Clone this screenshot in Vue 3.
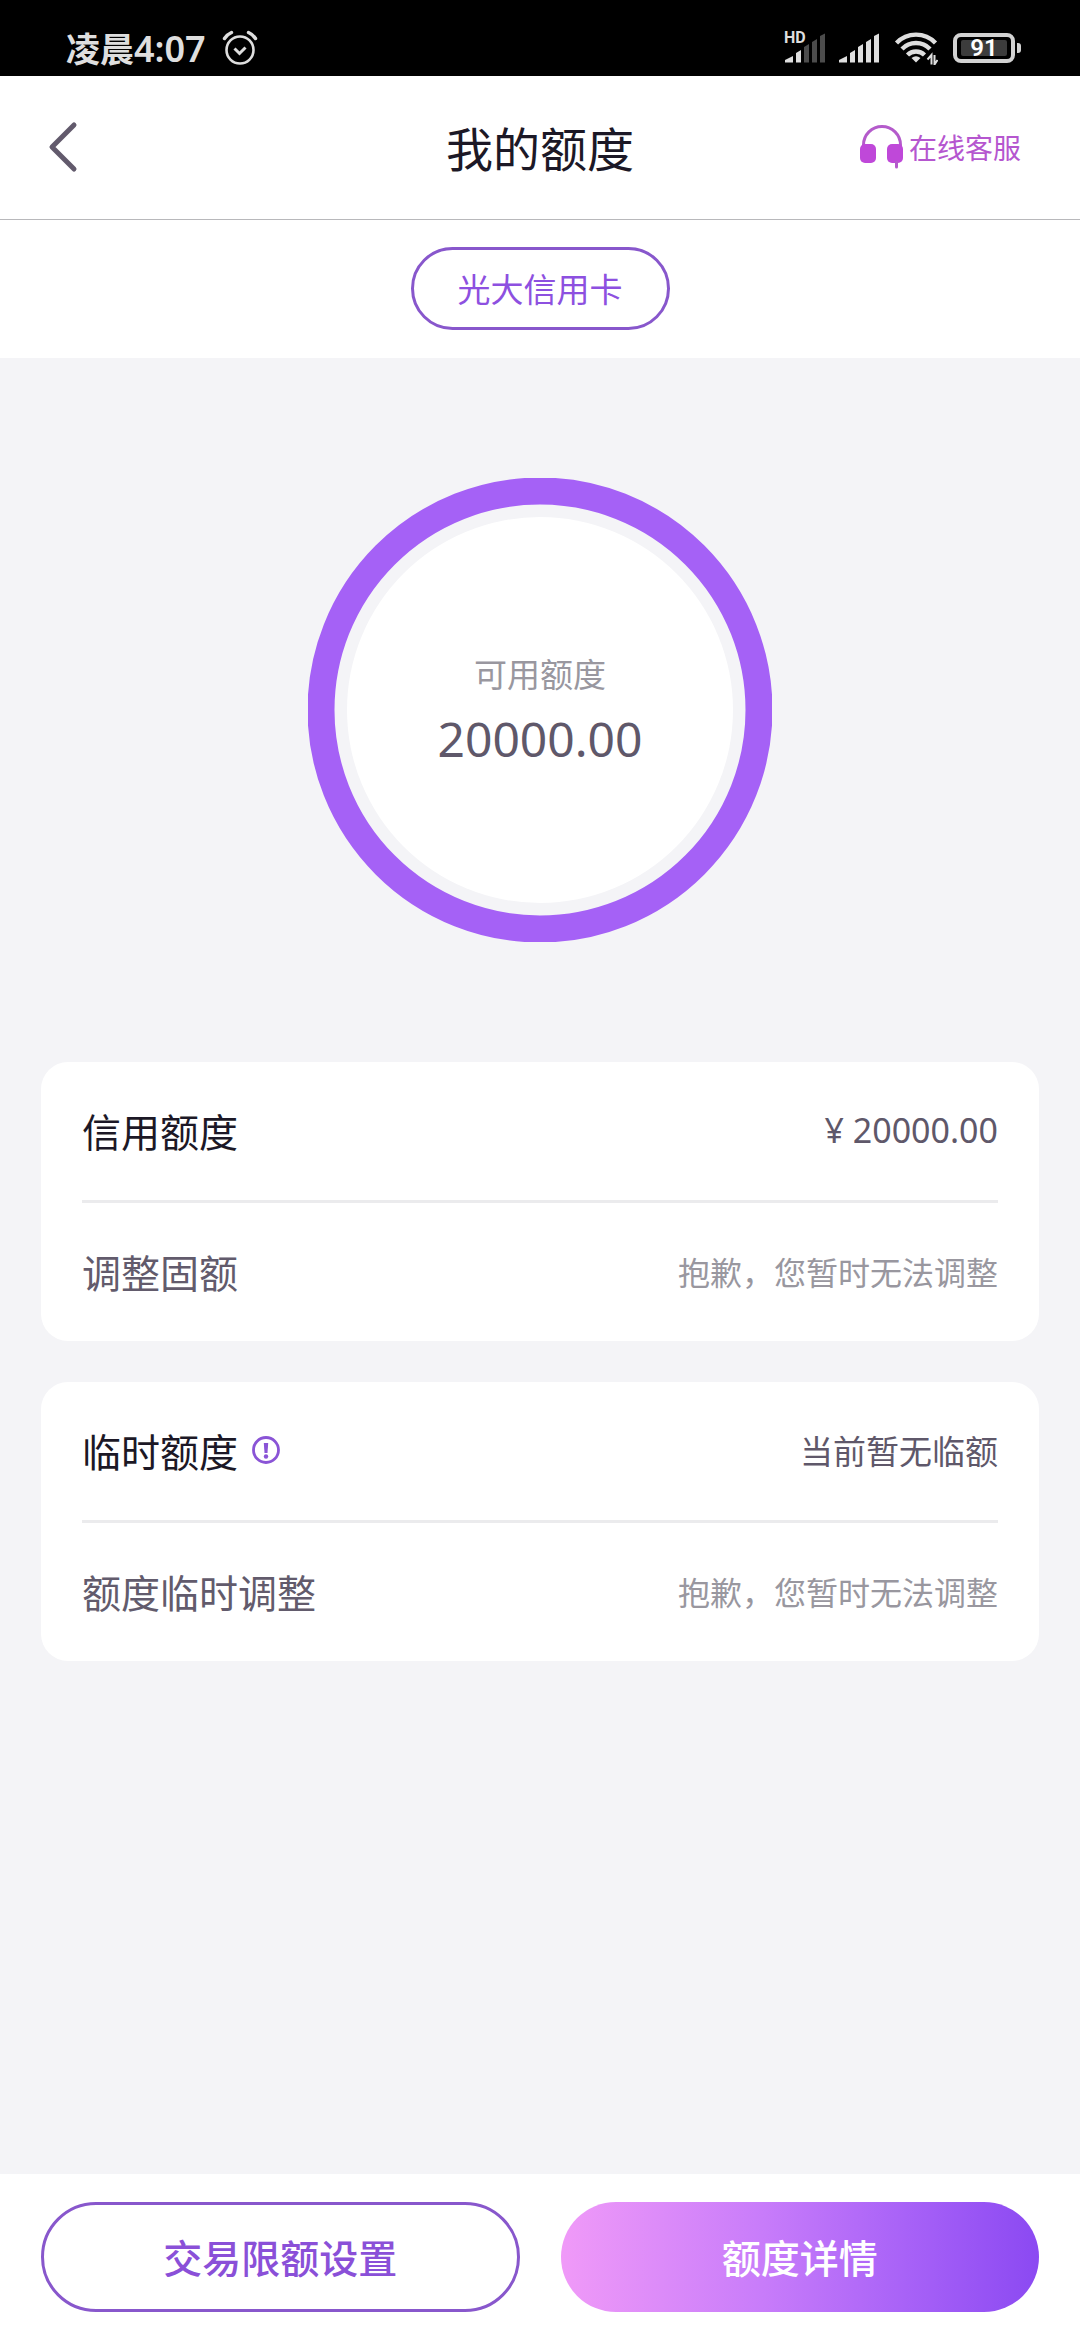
<script setup>
const groups = [
  {
    title: '信用额度',
    value: '¥ 20000.00',
    numeric: true,
    info: false,
    action: '调整固额',
    hint: '抱歉，您暂时无法调整'
  },
  {
    title: '临时额度',
    value: '当前暂无临额',
    numeric: false,
    info: true,
    action: '额度临时调整',
    hint: '抱歉，您暂时无法调整'
  }
]
</script>

<template>
  <div class="page">
    <div class="status">
      <div class="status-left">
        <span class="clock">凌晨<span class="digits">4:07</span></span>
        <svg class="alarm" width="36" height="36" viewBox="0 0 36 36" fill="none" stroke="#dedede" stroke-linecap="round">
          <circle cx="18" cy="20" r="13.5" stroke-width="2.6" />
          <path d="M12.5 18.5L17.5 23.5L23.5 17.5" stroke-width="3" stroke-linecap="butt" />
          <path d="M2.5 8.5Q5 4.5 9.5 2.5M26.5 2.5Q31 4.5 33.5 8.5" stroke-width="3.4" />
        </svg>
      </div>
      <div class="status-right">
        <div class="sim">
          <span class="hd">HD</span>
          <svg width="42" height="32" viewBox="0 0 42 32">
            <path fill="#dedede" d="M1 30.5V28L9 24V30.5ZM12 30.5V21L17 18V30.5Z" />
            <path fill="#4c4c4c" d="M20 30.5V15L25 12V30.5ZM28 30.5V10L33 7V30.5ZM36 30.5V4L41 1.5V30.5Z" />
          </svg>
        </div>
        <svg class="signal" width="42" height="32" viewBox="0 0 42 32">
          <path fill="#dedede" d="M1 30.5V28L9 24V30.5ZM12 30.5V21L17 18V30.5ZM20 30.5V15L25 12V30.5ZM28 30.5V10L33 7V30.5ZM36 30.5V4L41 1.5V30.5Z" />
        </svg>
        <svg class="wifi" width="44" height="34" viewBox="0 0 44 34" fill="none" stroke="#dedede" stroke-width="4.4">
          <path d="M2.5 12A27 27 0 0 1 41.5 12" />
          <path d="M8 18A19.5 19.5 0 0 1 36 18" />
          <path d="M13.5 24A12 12 0 0 1 30.5 24" />
          <path d="M17.5 27Q22 23.5 26.5 27L22 31.5Z" fill="#dedede" stroke="none" />
          <path d="M37 34V24M40.5 24V34" stroke="#000" stroke-width="6" />
          <path d="M37.5 33.5V24L33.5 28.5M40.5 24V33.5L43.5 29" stroke-width="2" />
        </svg>
        <div class="battery"><span class="charge">91</span></div>
      </div>
    </div>

    <header class="header">
      <button class="back" type="button" aria-label="返回">
        <svg width="34" height="54" viewBox="0 0 34 54" fill="none" stroke="#625a6c" stroke-width="5" stroke-linecap="round" stroke-linejoin="round">
          <path d="M28 5L6 27L28 49" />
        </svg>
      </button>
      <h1 class="title">我的额度</h1>
      <a class="service" href="#">
        <svg width="44" height="44" viewBox="0 0 44 44">
          <path d="M3.5 24V20A18.5 18.5 0 0 1 40.5 20V24" fill="none" stroke="#b45bcb" stroke-width="3" />
          <rect x="0" y="19" width="16" height="19" rx="5" fill="#bf48d9" />
          <rect x="27" y="19" width="16" height="19" rx="5" fill="#bf48d9" />
          <path d="M36.5 37V42" stroke="#b45bcb" stroke-width="3" stroke-linecap="round" />
        </svg>
        <span>在线客服</span>
      </a>
    </header>

    <nav class="tabs">
      <button class="tab" type="button">光大信用卡</button>
    </nav>

    <main class="content">
      <div class="gauge">
        <svg class="ring" viewBox="0 0 464 464">
          <circle cx="232" cy="232" r="219" fill="none" stroke="#a561f6" stroke-width="27" />
          <circle cx="232" cy="232" r="193" fill="#fff" />
        </svg>
        <div class="gauge-text">
          <span class="gauge-label">可用额度</span>
          <span class="gauge-value">20000.00</span>
        </div>
      </div>

      <section v-for="g in groups" :key="g.title" class="card">
        <div class="row">
          <h2 class="name">{{ g.title }}</h2>
          <button v-if="g.info" class="info" type="button" aria-label="说明">
            <svg width="28" height="28" viewBox="0 0 28 28">
              <circle cx="14" cy="14" r="12.5" fill="none" stroke="#8a54d6" stroke-width="2.8" />
              <path d="M11.8 7H16.2L15.5 17H12.5Z" fill="#8a54d6" />
              <circle cx="14" cy="20.5" r="2.2" fill="#8a54d6" />
            </svg>
          </button>
          <span class="value" :class="{ numeric: g.numeric }">{{ g.value }}</span>
        </div>
        <div class="row second">
          <span class="name">{{ g.action }}</span>
          <span class="value hint">{{ g.hint }}</span>
        </div>
      </section>
    </main>

    <footer class="footer">
      <button class="btn outline" type="button">交易限额设置</button>
      <button class="btn solid" type="button">额度详情</button>
    </footer>
  </div>
</template>

<style>
body {
  margin: 0;
}
</style>

<style scoped>
.page {
  display: flex;
  flex-direction: column;
  min-height: 100vh;
  background: #f4f4f7;
  color: #1c1826;
  font-family: "Noto Sans CJK SC", sans-serif;
}

button {
  margin: 0;
  padding: 0;
  border: 0;
  background: none;
  font-family: inherit;
}

svg {
  display: block;
  flex: none;
}

.status {
  display: flex;
  justify-content: space-between;
  align-items: center;
  height: 56px;
  padding: 20px 59px 0 66px;
  background: #000;
  color: #dedede;
}

.status-left,
.status-right {
  display: flex;
  align-items: center;
}

.status-left {
  gap: 16px;
}

.clock {
  font-size: 34px;
  line-height: 40px;
  font-weight: 700;
}

.digits {
  font-family: "Noto Sans", sans-serif;
  font-size: 36px;
  font-weight: 600;
}

.sim {
  position: relative;
  margin-right: 12px;
}

.hd {
  position: absolute;
  left: 0;
  top: -2px;
  font-family: Roboto, sans-serif;
  font-size: 16px;
  line-height: 16px;
  font-weight: 700;
}

.signal {
  margin-right: 14px;
}

.wifi {
  margin-right: 15px;
}

.battery {
  position: relative;
  display: flex;
  box-sizing: border-box;
  width: 62px;
  height: 30px;
  margin-right: 6px;
  padding: 3px 4px;
  border: 4px solid #d2d2d2;
  border-radius: 8px;
}

.battery::after {
  content: "";
  position: absolute;
  right: -10px;
  top: 6px;
  width: 4px;
  height: 10px;
  border-radius: 0 3px 3px 0;
  background: #d2d2d2;
}

.charge {
  flex: 1;
  border-radius: 2px;
  background: #3c3c3c;
  color: #fff;
  font-family: Roboto, sans-serif;
  font-size: 24px;
  line-height: 16px;
  font-weight: 600;
  text-align: center;
}

.header {
  display: grid;
  grid-template-columns: 1fr auto 1fr;
  align-items: center;
  box-sizing: border-box;
  height: 144px;
  padding: 0 59px 2px 46px;
  border-bottom: 1px solid #b8b8bb;
  background: #fff;
}

.title {
  margin: 0;
  padding-left: 13px;
  font-size: 47px;
  line-height: 64px;
  font-weight: 400;
}

.back {
  justify-self: start;
}

.service {
  display: flex;
  justify-self: end;
  align-items: center;
  gap: 5px;
  color: #b556cf;
  font-size: 28px;
  line-height: 40px;
  text-decoration: none;
}

.tabs {
  display: flex;
  justify-content: center;
  padding: 27px 0 28px;
  background: #fff;
}

.tab {
  height: 83px;
  padding: 0 44px 2px;
  border: 3px solid #8857cc;
  border-radius: 42px;
  color: #8d50e0;
  font-size: 33px;
  line-height: 48px;
}

.content {
  flex: 1;
  padding: 120px 41px 41px;
}

.gauge {
  display: grid;
  place-items: center;
  margin-bottom: 120px;
}

.ring,
.gauge-text {
  grid-area: 1 / 1;
}

.ring {
  width: 464px;
  height: 464px;
}

.gauge-text {
  display: flex;
  flex-direction: column;
  align-items: center;
  gap: 4px;
  padding-top: 6px;
  z-index: 1;
}

.gauge-label {
  color: #99979f;
  font-size: 33px;
  line-height: 48px;
}

.gauge-value {
  color: #5f586a;
  font-family: "Noto Sans", sans-serif;
  font-size: 48px;
  line-height: 76px;
}

.card {
  padding: 0 41px;
  border-radius: 27px;
  background: #fff;
}

.card + .card {
  margin-top: 41px;
}

.row {
  display: flex;
  align-items: center;
  height: 136px;
  padding-bottom: 2px;
}

.second {
  border-top: 3px solid #ebebed;
  color: #625b6c;
}

.name {
  margin: 0;
  font-size: 39px;
  line-height: 56px;
  font-weight: 400;
}

.info {
  margin-left: 14px;
}

.value {
  margin-left: auto;
  color: #5f586a;
  font-size: 33px;
  line-height: 48px;
}

.numeric {
  font-family: "Noto Sans", sans-serif;
  font-size: 34px;
}

.hint {
  color: #99979f;
  font-size: 32px;
}

.footer {
  display: grid;
  grid-template-columns: 1fr 1fr;
  gap: 41px;
  padding: 28px 41px;
  background: #fff;
}

.btn {
  box-sizing: border-box;
  height: 110px;
  padding-bottom: 2px;
  border-radius: 55px;
  font-size: 39px;
  line-height: 56px;
  font-weight: 500;
}

.outline {
  border: 3px solid #8857cc;
  color: #8a50d8;
}

.solid {
  background: linear-gradient(90deg, #f09af8, #c87cfa 42%, #a862f7 72%, #8b49f2);
  color: #fff;
}
</style>
